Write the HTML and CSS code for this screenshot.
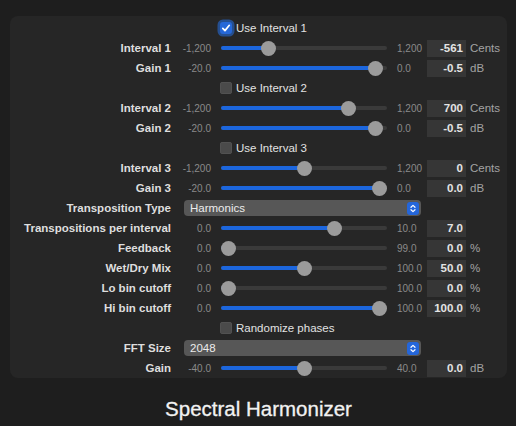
FILE: index.html
```html
<!DOCTYPE html>
<html>
<head>
<meta charset="utf-8">
<link rel="stylesheet" href="styles.css">
</head>
<body>
<div class="panel">
  <div class="row check-row">
    <div class="check-wrap"><span class="box checked"><svg viewBox="0 0 12 12" width="12" height="12"><path d="M2.8 6.3 L5 8.6 L9.3 3.3" fill="none" stroke="#fff" stroke-width="1.7" stroke-linecap="round" stroke-linejoin="round"/></svg></span><span class="check-text">Use Interval 1</span></div>
  </div>
  <div class="row">
    <div class="label">Interval 1</div><div class="min">-1,200</div>
    <div class="slider" style="--v:0.266"><div class="track"></div><div class="fill"></div><div class="thumb"></div></div>
    <div class="max">1,200</div><div class="value">-561</div><div class="unit">Cents</div>
  </div>
  <div class="row">
    <div class="label">Gain 1</div><div class="min">-20.0</div>
    <div class="slider" style="--v:0.975"><div class="track"></div><div class="fill"></div><div class="thumb"></div></div>
    <div class="max">0.0</div><div class="value">-0.5</div><div class="unit">dB</div>
  </div>
  <div class="row check-row">
    <div class="check-wrap"><span class="box"></span><span class="check-text">Use Interval 2</span></div>
  </div>
  <div class="row">
    <div class="label">Interval 2</div><div class="min">-1,200</div>
    <div class="slider" style="--v:0.7917"><div class="track"></div><div class="fill"></div><div class="thumb"></div></div>
    <div class="max">1,200</div><div class="value">700</div><div class="unit">Cents</div>
  </div>
  <div class="row">
    <div class="label">Gain 2</div><div class="min">-20.0</div>
    <div class="slider" style="--v:0.975"><div class="track"></div><div class="fill"></div><div class="thumb"></div></div>
    <div class="max">0.0</div><div class="value">-0.5</div><div class="unit">dB</div>
  </div>
  <div class="row check-row">
    <div class="check-wrap"><span class="box"></span><span class="check-text">Use Interval 3</span></div>
  </div>
  <div class="row">
    <div class="label">Interval 3</div><div class="min">-1,200</div>
    <div class="slider" style="--v:0.5"><div class="track"></div><div class="fill"></div><div class="thumb"></div></div>
    <div class="max">1,200</div><div class="value">0</div><div class="unit">Cents</div>
  </div>
  <div class="row">
    <div class="label">Gain 3</div><div class="min">-20.0</div>
    <div class="slider" style="--v:1"><div class="track"></div><div class="fill"></div><div class="thumb"></div></div>
    <div class="max">0.0</div><div class="value">0.0</div><div class="unit">dB</div>
  </div>
  <div class="row">
    <div class="label">Transposition Type</div>
    <div class="popup"><span class="popup-text">Harmonics</span><span class="stepper"><svg viewBox="0 0 12 13" width="12" height="13"><path d="M4 5.3 L6 3.4 L8 5.3 M4 7.7 L6 9.6 L8 7.7" fill="none" stroke="#fff" stroke-width="1.2" stroke-linecap="round" stroke-linejoin="round"/></svg></span></div>
  </div>
  <div class="row">
    <div class="label">Transpositions per interval</div><div class="min">0.0</div>
    <div class="slider" style="--v:0.7"><div class="track"></div><div class="fill"></div><div class="thumb"></div></div>
    <div class="max">10.0</div><div class="value">7.0</div><div class="unit"></div>
  </div>
  <div class="row">
    <div class="label">Feedback</div><div class="min">0.0</div>
    <div class="slider" style="--v:0"><div class="track"></div><div class="fill"></div><div class="thumb"></div></div>
    <div class="max">99.0</div><div class="value">0.0</div><div class="unit">%</div>
  </div>
  <div class="row">
    <div class="label">Wet/Dry Mix</div><div class="min">0.0</div>
    <div class="slider" style="--v:0.5"><div class="track"></div><div class="fill"></div><div class="thumb"></div></div>
    <div class="max">100.0</div><div class="value">50.0</div><div class="unit">%</div>
  </div>
  <div class="row">
    <div class="label">Lo bin cutoff</div><div class="min">0.0</div>
    <div class="slider" style="--v:0"><div class="track"></div><div class="fill"></div><div class="thumb"></div></div>
    <div class="max">100.0</div><div class="value">0.0</div><div class="unit">%</div>
  </div>
  <div class="row">
    <div class="label">Hi bin cutoff</div><div class="min">0.0</div>
    <div class="slider" style="--v:1"><div class="track"></div><div class="fill"></div><div class="thumb"></div></div>
    <div class="max">100.0</div><div class="value">100.0</div><div class="unit">%</div>
  </div>
  <div class="row check-row">
    <div class="check-wrap"><span class="box"></span><span class="check-text">Randomize phases</span></div>
  </div>
  <div class="row">
    <div class="label">FFT Size</div>
    <div class="popup"><span class="popup-text">2048</span><span class="stepper"><svg viewBox="0 0 12 13" width="12" height="13"><path d="M4 5.3 L6 3.4 L8 5.3 M4 7.7 L6 9.6 L8 7.7" fill="none" stroke="#fff" stroke-width="1.2" stroke-linecap="round" stroke-linejoin="round"/></svg></span></div>
  </div>
  <div class="row">
    <div class="label">Gain</div><div class="min">-40.0</div>
    <div class="slider" style="--v:0.5"><div class="track"></div><div class="fill"></div><div class="thumb"></div></div>
    <div class="max">40.0</div><div class="value">0.0</div><div class="unit">dB</div>
  </div>
</div>
<div class="title">Spectral Harmonizer</div>
</body>
</html>
```
FILE: styles.css
```css
html, body {
  margin: 0;
  padding: 0;
  background: #1e1e1e;
  font-family: "Liberation Sans", Arial, sans-serif;
  color: #e0e0e0;
}
body {
  width: 516px;
  height: 426px;
  overflow: hidden;
}
.panel {
  margin: 16px 9px 0 10px;
  padding: 2px 0 0;
  background: #262626;
  border-radius: 8px;
  height: 360px;
}
.row {
  display: grid;
  grid-template-columns: 161px 50px 166px 40px 39px 1fr;
  height: 20px;
  align-items: center;
}
.label {
  grid-column: 1;
  text-align: right;
  font-weight: bold;
  font-size: 11.5px;
  color: #dedede;
  white-space: nowrap;
}
.min {
  grid-column: 2;
  text-align: right;
  padding-right: 10px;
  font-size: 10px;
  color: #8a8a8a;
}
.max {
  grid-column: 4;
  padding-left: 10px;
  font-size: 10px;
  color: #8a8a8a;
}
.slider {
  grid-column: 3;
  position: relative;
  height: 16px;
}
.track {
  position: absolute;
  left: 0;
  right: 0;
  top: 6px;
  height: 4px;
  border-radius: 2px;
  background: #3a3a3a;
}
.fill {
  position: absolute;
  left: 0;
  top: 6px;
  height: 4px;
  border-radius: 2px;
  background: #1c66dd;
  width: calc(7.5px + (100% - 15px) * var(--v));
}
.thumb {
  position: absolute;
  top: 0.5px;
  left: calc((100% - 15px) * var(--v));
  width: 15px;
  height: 15px;
  border-radius: 50%;
  background: #9b9b9b;
}
.value {
  grid-column: 5;
  height: 17px;
  line-height: 17px;
  background: #363636;
  text-align: right;
  padding-right: 3px;
  font-size: 11.5px;
  font-weight: bold;
  color: #e4e4e4;
}
.unit {
  grid-column: 6;
  padding-left: 4px;
  font-size: 11.5px;
  color: #a3a3a3;
}
.check-wrap {
  grid-column: 3 / 7;
  margin-left: -1px;
  display: flex;
  align-items: center;
  gap: 4px;
}
.box {
  width: 12px;
  height: 12px;
  border-radius: 3px;
  background: #4a4a4a;
  box-shadow: inset 0 0 0 0.5px #5a5a5a;
  display: flex;
}
.box.checked {
  background: #2668d8;
  box-shadow: 0 0 0 2.5px rgba(38, 94, 180, 0.75);
}
.check-text {
  font-size: 11.5px;
  color: #e2e2e2;
}
.popup {
  grid-column: 2 / 5;
  margin-left: 13px;
  margin-right: 6px;
  height: 16px;
  border-radius: 4px;
  background: #575757;
  display: flex;
  align-items: center;
  justify-content: space-between;
  padding: 0 2px 0 6px;
}
.popup-text {
  font-size: 11.5px;
  color: #ececec;
}
.stepper {
  width: 12px;
  height: 13px;
  border-radius: 3px;
  background: #2466da;
  display: flex;
}
.title {
  margin-top: 19px;
  text-align: center;
  font-size: 20.5px;
  line-height: 24px;
  color: #f2f2f2;
  padding-left: 1px;
  -webkit-text-stroke: 0.3px #f2f2f2;
}
```
